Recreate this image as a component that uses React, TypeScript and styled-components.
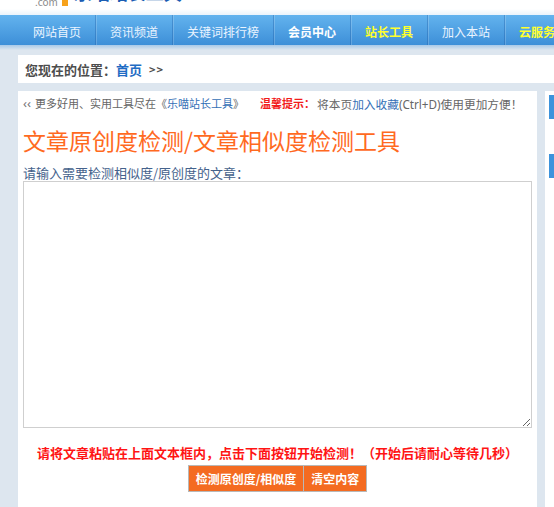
import { createGlobalStyle, styled } from 'styled-components';

const GlobalStyle = createGlobalStyle`
  html, body {
    margin: 0;
    padding: 0;
    background: #dde6ef;
    overflow: hidden;
    font-family: "Noto Sans CJK SC", "Noto Sans", sans-serif;
  }
`;

const Header = styled.div`
  height: 15px;
  overflow: hidden;
  display: flex;
  align-items: flex-end;
  padding-left: 35px;
  background: linear-gradient(#ffffff 60%, #eaf3fb);
`;

const Logo = styled.div`
  display: flex;
  align-items: flex-end;
  gap: 4px;
  margin-bottom: 8px;
`;

const LogoDomain = styled.span`
  font-size: 10px;
  line-height: 10px;
  color: #8a8a8a;
`;

const LogoMark = styled.span`
  width: 6px;
  height: 18px;
  margin-bottom: 1px;
  background: #f7a21b;
`;

const LogoName = styled.span`
  font-size: 18px;
  line-height: 18px;
  font-weight: 700;
  color: #1b5db3;
  margin: 0 0 6px 2px;
`;

const Nav = styled.nav`
  height: 30px;
  display: flex;
  align-items: stretch;
  padding-left: 19px;
  background: linear-gradient(#63b3ee, #3d8fd8);
  white-space: nowrap;
`;

type Tone = 'normal' | 'strong' | 'accent';

const NavItem = styled.a<{ $tone: Tone; $first?: boolean }>`
  display: flex;
  align-items: center;
  padding: 3px 14px 0;
  font-size: 12px;
  text-decoration: none;
  font-weight: ${({ $tone }) => ($tone === 'normal' ? 400 : 700)};
  color: ${({ $tone }) => ($tone === 'accent' ? '#ffff2e' : $tone === 'strong' ? '#ffffff' : '#eaf4ff')};
  border-left: ${({ $first }) => ($first ? 'none' : '1px solid rgba(30, 90, 160, 0.35)')};
  box-shadow: ${({ $first }) => ($first ? 'none' : 'inset 1px 0 rgba(255, 255, 255, 0.18)')};
`;

const NavShade = styled.div`
  height: 5px;
  background: linear-gradient(#a8c9e8, #dde6ef);
`;

const Wrapper = styled.div`
  width: 1000px;
  padding: 5px 0 0 18px;
`;

const Breadcrumb = styled.div`
  height: 28px;
  display: flex;
  align-items: center;
  padding-left: 7px;
  background: #ffffff;
  font-size: 13px;
  font-weight: 700;
  color: #4d4d4d;
  margin-bottom: 8px;
`;

const Link = styled.a`
  color: #3470b6;
  text-decoration: none;
`;

const CrumbLink = styled(Link)`
  color: #1f6cc4;
`;

const Arrows = styled.span`
  font-size: 11px;
  margin-left: 7px;
  letter-spacing: 1px;
`;

const Row = styled.div`
  display: flex;
  gap: 8px;
  align-items: flex-start;
`;

const MainPanel = styled.div`
  width: 519px;
  box-sizing: border-box;
  min-height: 440px;
  padding: 2px 5px 20px;
  background: #ffffff;
`;

const Notice = styled.div`
  display: flex;
  align-items: center;
  height: 20px;
  font-family: "Noto Sans", "Noto Sans CJK SC", sans-serif;
  font-size: 11px;
  color: #666666;
  white-space: nowrap;
`;

const Quote = styled.span`
  font-size: 13px;
  margin-right: 4px;
  color: #777;
`;

const Warn = styled.b`
  color: #f21c1c;
  margin-left: 16px;
  margin-right: 2px;
`;

const Tip = styled.span`
  font-size: 11.7px;
`;

const Title = styled.h1`
  margin: 12px 0 0;
  font-size: 23px;
  line-height: 30px;
  font-weight: 400;
  color: #ff6a1f;
`;

const FieldLabel = styled.label`
  display: block;
  margin-top: 10px;
  font-size: 13px;
  line-height: 16px;
  color: #45628c;
`;

const TextArea = styled.textarea`
  display: block;
  width: 100%;
  height: 247px;
  box-sizing: border-box;
  margin: 0;
  border: 1px solid #cfcfcf;
  outline: none;
  background: #ffffff;
`;

const Hint = styled.p`
  margin: 15px 0 0;
  text-align: center;
  font-size: 13px;
  line-height: 20px;
  font-weight: 700;
  color: #ff1414;
`;

const Actions = styled.div`
  display: flex;
  justify-content: center;
  margin-top: 2px;
`;

const ActionButton = styled.button`
  height: 27px;
  padding: 0 7px;
  border: 1px solid #b8b8b8;
  background: #f46b21;
  color: #ffffff;
  font-family: inherit;
  font-size: 12px;
  font-weight: 700;
  cursor: pointer;

  & + & {
    border-left: none;
  }
`;

const Sidebar = styled.div`
  width: 250px;
  height: 440px;
  padding: 4px;
  box-sizing: border-box;
  background: #ffffff;
  display: flex;
  flex-direction: column;
  gap: 35px;
`;

const SideTitle = styled.div`
  height: 24px;
  background: #3c93dc;
`;

const navItems: { label: string; tone: Tone }[] = [
  { label: '网站首页', tone: 'normal' },
  { label: '资讯频道', tone: 'normal' },
  { label: '关键词排行榜', tone: 'normal' },
  { label: '会员中心', tone: 'strong' },
  { label: '站长工具', tone: 'accent' },
  { label: '加入本站', tone: 'normal' },
  { label: '云服务', tone: 'accent' },
];

export default function App() {
  return (
    <>
      <GlobalStyle />
      <Header>
        <Logo>
          <LogoDomain>.com</LogoDomain>
          <LogoMark />
          <LogoName>乐喵站长工具</LogoName>
        </Logo>
      </Header>
      <Nav>
        {navItems.map((item, i) => (
          <NavItem key={item.label} $tone={item.tone} $first={i === 0}>
            {item.label}
          </NavItem>
        ))}
      </Nav>
      <NavShade />
      <Wrapper>
        <Breadcrumb>
          您现在的位置：<CrumbLink>首页</CrumbLink>
          <Arrows>&gt;&gt;</Arrows>
        </Breadcrumb>
        <Row>
          <MainPanel>
            <Notice>
              <Quote>‹‹</Quote>
              更多好用、实用工具尽在《<Link>乐喵站长工具</Link>》
              <Warn>温馨提示：</Warn>
              <Tip>
                将本页<Link>加入收藏</Link>(Ctrl+D)使用更加方便！
              </Tip>
            </Notice>
            <Title>文章原创度检测/文章相似度检测工具</Title>
            <FieldLabel htmlFor="article">请输入需要检测相似度/原创度的文章：</FieldLabel>
            <TextArea id="article" />
            <Hint>请将文章粘贴在上面文本框内，点击下面按钮开始检测！（开始后请耐心等待几秒）</Hint>
            <Actions>
              <ActionButton type="button">检测原创度/相似度</ActionButton>
              <ActionButton type="button">清空内容</ActionButton>
            </Actions>
          </MainPanel>
          <Sidebar>
            <SideTitle />
            <SideTitle />
          </Sidebar>
        </Row>
      </Wrapper>
    </>
  );
}
